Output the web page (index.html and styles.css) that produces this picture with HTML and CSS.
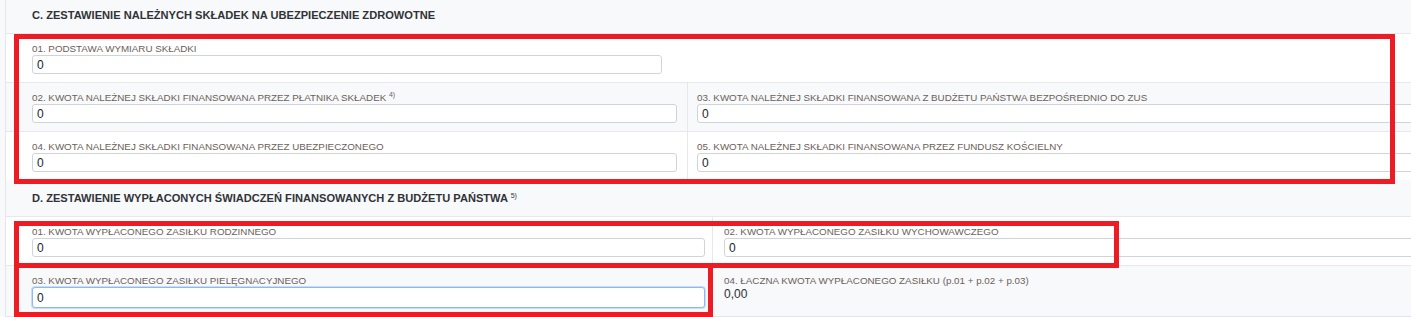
FILE: index.html
```html
<!DOCTYPE html>
<html lang="pl">
<head>
    <meta charset="UTF-8">
    <meta name="viewport" content="width=device-width, initial-scale=1.0">
    <title>Zestawienie składek</title>
    <link rel="stylesheet" href="styles.css">
</head>
<body>
    <div class="form">
        <div class="section-head">C. ZESTAWIENIE NALEŻNYCH SKŁADEK NA UBEZPIECZENIE ZDROWOTNE</div>

        <div class="row white">
            <div class="cell left single">
                <label for="c01">01. PODSTAWA WYMIARU SKŁADKI</label>
                <input type="text" id="c01" class="short" value="0">
            </div>
        </div>

        <div class="row gray">
            <div class="cell left">
                <label for="c02">02. KWOTA NALEŻNEJ SKŁADKI FINANSOWANA PRZEZ PŁATNIKA SKŁADEK <sup>4)</sup></label>
                <input type="text" id="c02" value="0">
            </div>
            <div class="cell right">
                <label for="c03">03. KWOTA NALEŻNEJ SKŁADKI FINANSOWANA Z BUDŻETU PAŃSTWA BEZPOŚREDNIO DO ZUS</label>
                <input type="text" id="c03" value="0">
            </div>
        </div>

        <div class="row white">
            <div class="cell left">
                <label for="c04">04. KWOTA NALEŻNEJ SKŁADKI FINANSOWANA PRZEZ UBEZPIECZONEGO</label>
                <input type="text" id="c04" value="0">
            </div>
            <div class="cell right">
                <label for="c05">05. KWOTA NALEŻNEJ SKŁADKI FINANSOWANA PRZEZ FUNDUSZ KOŚCIELNY</label>
                <input type="text" id="c05" value="0">
            </div>
        </div>

        <div class="section-head tall">D. ZESTAWIENIE WYPŁACONYCH ŚWIADCZEŃ FINANSOWANYCH Z BUDŻETU PAŃSTWA <sup>5)</sup></div>

        <div class="row white d">
            <div class="cell left">
                <label for="d01">01. KWOTA WYPŁACONEGO ZASIŁKU RODZINNEGO</label>
                <input type="text" id="d01" value="0">
            </div>
            <div class="cell right">
                <label for="d02">02. KWOTA WYPŁACONEGO ZASIŁKU WYCHOWAWCZEGO</label>
                <input type="text" id="d02" value="0">
            </div>
        </div>

        <div class="row gray d last">
            <div class="cell left">
                <label for="d03">03. KWOTA WYPŁACONEGO ZASIŁKU PIELĘGNACYJNEGO</label>
                <input type="text" id="d03" class="focused" value="0" autofocus>
            </div>
            <div class="cell right">
                <span class="label">04. ŁACZNA KWOTA WYPŁACONEGO ZASIŁKU (p.01 + p.02 + p.03)</span>
                <div class="sum">0,00</div>
            </div>
        </div>
    </div>

    <!-- red annotation frames drawn over the form -->
    <div class="mark mark-c"></div>
    <div class="mark mark-d1"></div>
    <div class="mark mark-d3"></div>
</body>
</html>
```

FILE: styles.css
```css
body {
    margin: 0;
    background-color: #f8f9fb;
    font-family: "Liberation Sans", Arial, sans-serif;
    overflow: hidden;
    position: relative;
}
.form {
    margin-left: 5px;
    width: 1500px;
    border-left: 1px solid #e4e6eb;
}
.section-head {
    background-color: #f8f9fb;
    color: #2f3337;
    font-size: 11.1px;
    font-weight: bold;
    line-height: 14px;
    padding: 8px 0 11px 26px;
}
.section-head.tall {
    padding-top: 11px;
    padding-bottom: 11px;
}
sup {
    font-size: 7px;
    font-weight: normal;
    vertical-align: 4px;
    line-height: 0;
}
.row {
    display: flex;
    border-top: 1px solid #e6e8ee;
}
.row.white {
    background-color: #fff;
}
.row.gray {
    background-color: #f8f9fb;
}
.row.last {
    border-bottom: 1px solid #e4e4f0;
}
.cell {
    padding: 9px 0 8px 0;
    box-sizing: border-box;
}
.cell.left {
    width: 682px;
    padding-left: 26px;
    padding-right: 10px;
    border-right: 1px solid #e6e8ee;
}
.cell.left.single {
    border-right: none;
}
.cell.right {
    flex: 1;
    padding-left: 9px;
}
.d .cell.left {
    width: 707px;
    padding-right: 7px;
}
.d .cell.right {
    padding-left: 11px;
}
label, .label {
    display: block;
    color: #6b6159;
    font-size: 9.8px;
    line-height: 12px;
}
input {
    display: block;
    box-sizing: border-box;
    width: 100%;
    height: 19px;
    margin: 0;
    padding: 0 4px;
    border: 1px solid #cfd4da;
    border-radius: 3px;
    background-color: #fff;
    font-family: "Liberation Sans", Arial, sans-serif;
    font-size: 12px;
    color: #212529;
    outline: none;
}
input.short {
    width: 630px;
}
input.focused {
    height: 21px;
    border-color: #8db9ef;
    box-shadow: 0 0 0 1px #c9ddf6;
}
.sum {
    font-size: 12px;
    color: #2b2f33;
    line-height: 14px;
}
.mark {
    position: absolute;
    left: 14px;
    border: 5px solid #ed1c24;
    box-sizing: border-box;
}
.mark-c {
    top: 34px;
    width: 1381px;
    height: 150px;
}
.mark-d1 {
    top: 221px;
    width: 1105px;
    height: 47px;
}
.mark-d3 {
    top: 263px;
    width: 699px;
    height: 54px;
}
```
